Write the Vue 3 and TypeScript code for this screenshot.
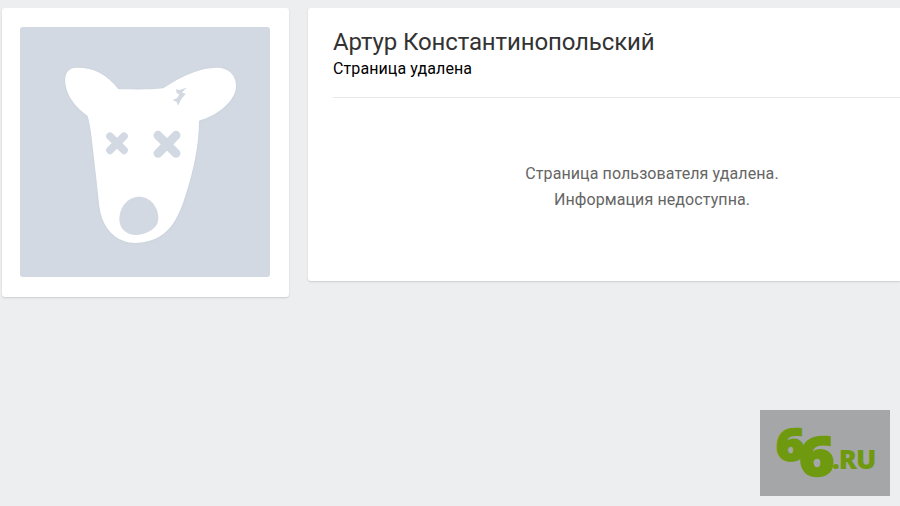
<script setup lang="ts">
const name = 'Артур Константинопольский'
const status = 'Страница удалена'
const message = ['Страница пользователя удалена.', 'Информация недоступна.']
</script>

<template>
  <div class="page">
    <div class="card side">
      <div class="avatar">
        <svg viewBox="0 -9 750 750" width="250" height="250">
          <path
            class="head"
            d="M170 113 C225 113 262 135 295 178 C340 178 390 180 430 175 C480 140 540 113 590 113 C630 113 650 140 648 172 C645 215 590 258 537 272 C537 340 522 420 495 500 C478 555 455 600 415 622 C385 638 340 645 310 632 C270 618 245 580 238 530 C232 470 226 420 218 350 C214 310 210 285 203 258 C170 235 140 200 136 160 C133 130 145 113 170 113 Z"
          />
          <path class="eye small" d="M270 319 L312 361 M312 319 L270 361" />
          <path class="eye" d="M414 316 L468 370 M468 316 L414 370" />
          <path class="hole" d="M358 500 C390 500 415 530 415 565 C415 590 395 605 365 613 C330 620 300 605 298 570 C297 530 325 500 358 500 Z" />
          <path class="scar" d="M500 173 L478 180 L468 178 L470 190 L478 192 L472 204 L457 210 L470 216 L474 227 L484 207 L497 192 L486 187 Z" />
        </svg>
      </div>
    </div>
    <div class="card main">
      <div class="head-block">
        <h1 class="name">{{ name }}</h1>
        <div class="status">{{ status }}</div>
      </div>
      <div class="message">
        <p v-for="line in message" :key="line">{{ line }}</p>
      </div>
    </div>
    <svg class="logo" viewBox="0 0 130 86" width="130" height="86">
      <text class="six" transform="translate(16 0) scale(1.12 1)"><tspan class="first" x="0" y="51.5">6</tspan><tspan class="second" x="20.5" y="66.5">6</tspan></text>
      <text x="72" y="59" class="ru">.RU</text>
    </svg>
  </div>
</template>

<style>
html, body { background: #edeef0; overflow: hidden; }
</style>

<style scoped>
.page {
  display: flex;
  align-items: flex-start;
  gap: 19px;
  width: 900px;
  height: 506px;
  box-sizing: border-box;
  padding: 8px 0 0 2px;
  font-family: Roboto, sans-serif;
}
.card {
  background: #fff;
  border-radius: 3px;
  box-shadow: 0 1px 2px rgba(0, 0, 0, 0.14);
}
.side { width: 287px; height: 289px; box-sizing: border-box; padding: 19px 18px; flex-shrink: 0; }
.avatar { width: 250px; height: 250px; background: #d2d9e2; border-radius: 3px; }
.avatar svg { display: block; }
.head { fill: #fff; filter: drop-shadow(0 1px 3px rgba(150, 160, 175, 0.15)); }
.eye { stroke: #d2d9e2; stroke-width: 27; stroke-linecap: round; fill: none; }
.eye.small { stroke-width: 23; }
.hole { fill: #d2d9e2; }
.scar { fill: #d2d9e2; }

.main { flex: 1; height: 273px; box-sizing: border-box; padding-left: 25px; border-radius: 3px 0 0 3px; }
.head-block { height: 90px; box-sizing: border-box; padding-top: 20px; border-bottom: 1px solid #e7e8ec; }
.name { margin: 0; font-size: 24px; letter-spacing: -0.12px; line-height: 29px; font-weight: 400; color: #333; }
.status { margin-top: 3px; font-size: 16px; letter-spacing: 0.1px; line-height: 18px; color: #000; }
.message { padding: 63px 0 0 71px; text-align: center; color: #656565; font-size: 16px; letter-spacing: 0.1px; line-height: 26px; }
.message p { margin: 0; }

.logo {
  position: absolute;
  left: 760px;
  top: 410px;
  background: #a5a6a8;
}
.logo text { fill: #6f9a0f; font-family: "Open Sans", sans-serif; font-weight: 800; }
.six { stroke: #6f9a0f; stroke-width: 1.6px; }
.first { font-size: 44px; }
.second { font-size: 54px; }
.ru { font-size: 27px; letter-spacing: -1px; }
</style>
